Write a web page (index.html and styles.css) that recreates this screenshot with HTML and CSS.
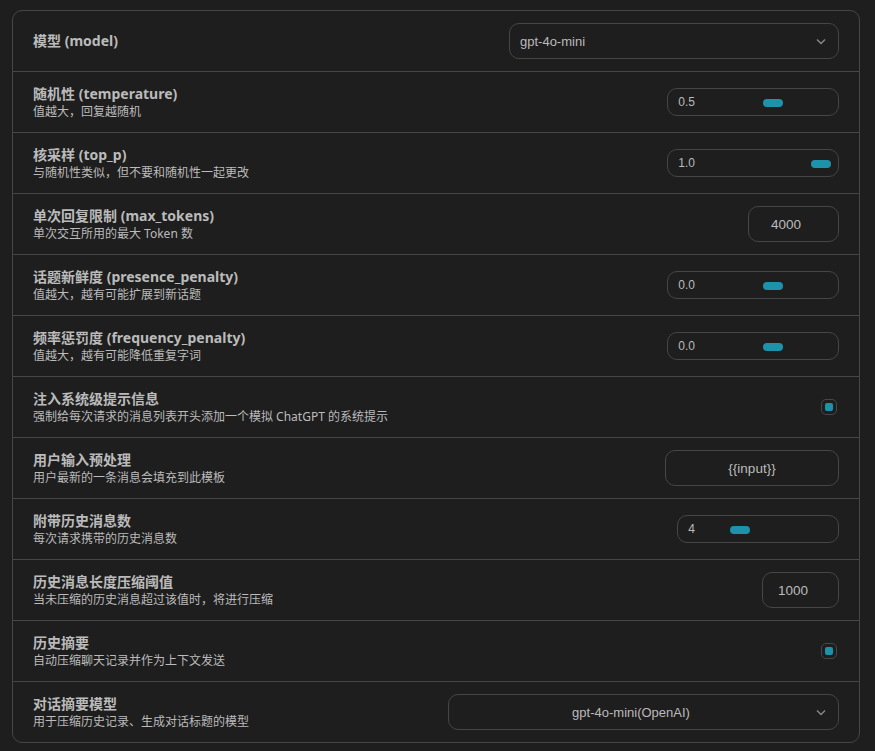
FILE: index.html
```html
<!DOCTYPE html>
<html lang="zh-CN">
<head>
<meta charset="utf-8">
<title>设置</title>
<link rel="stylesheet" href="styles.css">
</head>
<body>
<div class="list">
  <div class="item">
    <div class="label"><div class="title">模型 (model)</div></div>
    <div class="select select-model">
      <span class="select-text">gpt-4o-mini</span>
      <svg class="chev" width="10" height="7" viewBox="0 0 10 7"><polyline points="1,1.5 5,5.5 9,1.5" fill="none" stroke="#8a8a8a" stroke-width="1.3"/></svg>
    </div>
  </div>
  <div class="item">
    <div class="label"><div class="title">随机性 (temperature)</div><div class="sub">值越大，回复越随机</div></div>
    <div class="range"><span class="range-val">0.5</span><div class="track"><div class="thumb" style="left:66px"></div></div></div>
  </div>
  <div class="item">
    <div class="label"><div class="title">核采样 (top_p)</div><div class="sub">与随机性类似，但不要和随机性一起更改</div></div>
    <div class="range"><span class="range-val">1.0</span><div class="track"><div class="thumb" style="left:114px"></div></div></div>
  </div>
  <div class="item">
    <div class="label"><div class="title">单次回复限制 (max_tokens)</div><div class="sub">单次交互所用的最大 Token 数</div></div>
    <div class="num num-wide">4000</div>
  </div>
  <div class="item">
    <div class="label"><div class="title">话题新鲜度 (presence_penalty)</div><div class="sub">值越大，越有可能扩展到新话题</div></div>
    <div class="range"><span class="range-val">0.0</span><div class="track"><div class="thumb" style="left:66px"></div></div></div>
  </div>
  <div class="item">
    <div class="label"><div class="title">频率惩罚度 (frequency_penalty)</div><div class="sub">值越大，越有可能降低重复字词</div></div>
    <div class="range"><span class="range-val">0.0</span><div class="track"><div class="thumb" style="left:66px"></div></div></div>
  </div>
  <div class="item">
    <div class="label"><div class="title">注入系统级提示信息</div><div class="sub">强制给每次请求的消息列表开头添加一个模拟 ChatGPT 的系统提示</div></div>
    <div class="check"><div class="check-dot"></div></div>
  </div>
  <div class="item">
    <div class="label"><div class="title">用户输入预处理</div><div class="sub">用户最新的一条消息会填充到此模板</div></div>
    <div class="text-input">{{input}}</div>
  </div>
  <div class="item">
    <div class="label"><div class="title">附带历史消息数</div><div class="sub">每次请求携带的历史消息数</div></div>
    <div class="range"><span class="range-val">4</span><div class="track"><div class="thumb" style="left:33px"></div></div></div>
  </div>
  <div class="item">
    <div class="label"><div class="title">历史消息长度压缩阈值</div><div class="sub">当未压缩的历史消息超过该值时，将进行压缩</div></div>
    <div class="num num-narrow">1000</div>
  </div>
  <div class="item">
    <div class="label"><div class="title">历史摘要</div><div class="sub">自动压缩聊天记录并作为上下文发送</div></div>
    <div class="check"><div class="check-dot"></div></div>
  </div>
  <div class="item">
    <div class="label"><div class="title">对话摘要模型</div><div class="sub">用于压缩历史记录、生成对话标题的模型</div></div>
    <div class="select select-summary">
      <span class="select-text">gpt-4o-mini(OpenAI)</span>
      <svg class="chev" width="10" height="7" viewBox="0 0 10 7"><polyline points="1,1.5 5,5.5 9,1.5" fill="none" stroke="#8a8a8a" stroke-width="1.3"/></svg>
    </div>
  </div>
</div>
</body>
</html>
```

FILE: styles.css
```css
html, body {
  margin: 0;
  background: #1e1e1e;
}
body {
  padding: 10px 0 0 12px;
  font-family: "Noto Sans", "Noto Sans CJK SC", sans-serif;
  color: rgb(187, 187, 187);
}
.list {
  width: 846px;
  border: 1px solid #464646;
  border-radius: 10px;
  overflow: hidden;
}
.item {
  height: 60px;
  padding: 0 20px;
  display: flex;
  align-items: center;
  justify-content: space-between;
  border-bottom: 1px solid #464646;
}
.item:last-child {
  border-bottom: none;
}
.title {
  font-size: 14px;
  line-height: 20px;
  font-weight: bold;
}
.sub {
  font-size: 12px;
  line-height: 16px;
}
.select {
  position: relative;
  height: 36px;
  box-sizing: border-box;
  border: 1px solid #464646;
  border-radius: 10px;
  display: flex;
  align-items: center;
  padding: 0 35px 0 10px;
  font-family: "Liberation Sans", "Noto Sans CJK SC", sans-serif;
  font-size: 13px;
}
.select-model {
  width: 330px;
}
.select-summary {
  width: 391px;
  justify-content: center;
}
.chev {
  position: absolute;
  right: 12px;
  top: 14px;
}
.range {
  height: 28px;
  box-sizing: border-box;
  border: 1px solid #464646;
  border-radius: 10px;
  padding: 0 10px;
  display: flex;
  align-items: center;
  font-family: "Liberation Sans", sans-serif;
  font-size: 12px;
}
.range-val {
  line-height: 16px;
}
.track {
  position: relative;
  width: 129px;
  height: 8px;
  margin: 1px 2px 0 2px;
}
.thumb {
  position: absolute;
  top: 0;
  width: 20px;
  height: 8px;
  border-radius: 10px;
  background: rgb(29, 147, 171);
}
.num {
  height: 36px;
  box-sizing: border-box;
  border: 1px solid #464646;
  border-radius: 10px;
  display: flex;
  align-items: center;
  justify-content: center;
  padding: 0 15px 0 0;
  font-family: "Liberation Sans", sans-serif;
  font-size: 13.5px;
}
.num-wide {
  width: 91px;
}
.num-narrow {
  width: 77px;
}
.text-input {
  width: 174px;
  height: 36px;
  box-sizing: border-box;
  border: 1px solid #464646;
  border-radius: 10px;
  display: flex;
  align-items: center;
  justify-content: center;
  font-family: "Liberation Sans", sans-serif;
  font-size: 13.5px;
}
.check {
  width: 16px;
  height: 16px;
  box-sizing: border-box;
  border: 1px solid #464646;
  border-radius: 5px;
  display: flex;
  align-items: center;
  justify-content: center;
  margin-right: 2px;
}
.check-dot {
  width: 8px;
  height: 8px;
  border-radius: 2px;
  background: rgb(29, 147, 171);
}
```
